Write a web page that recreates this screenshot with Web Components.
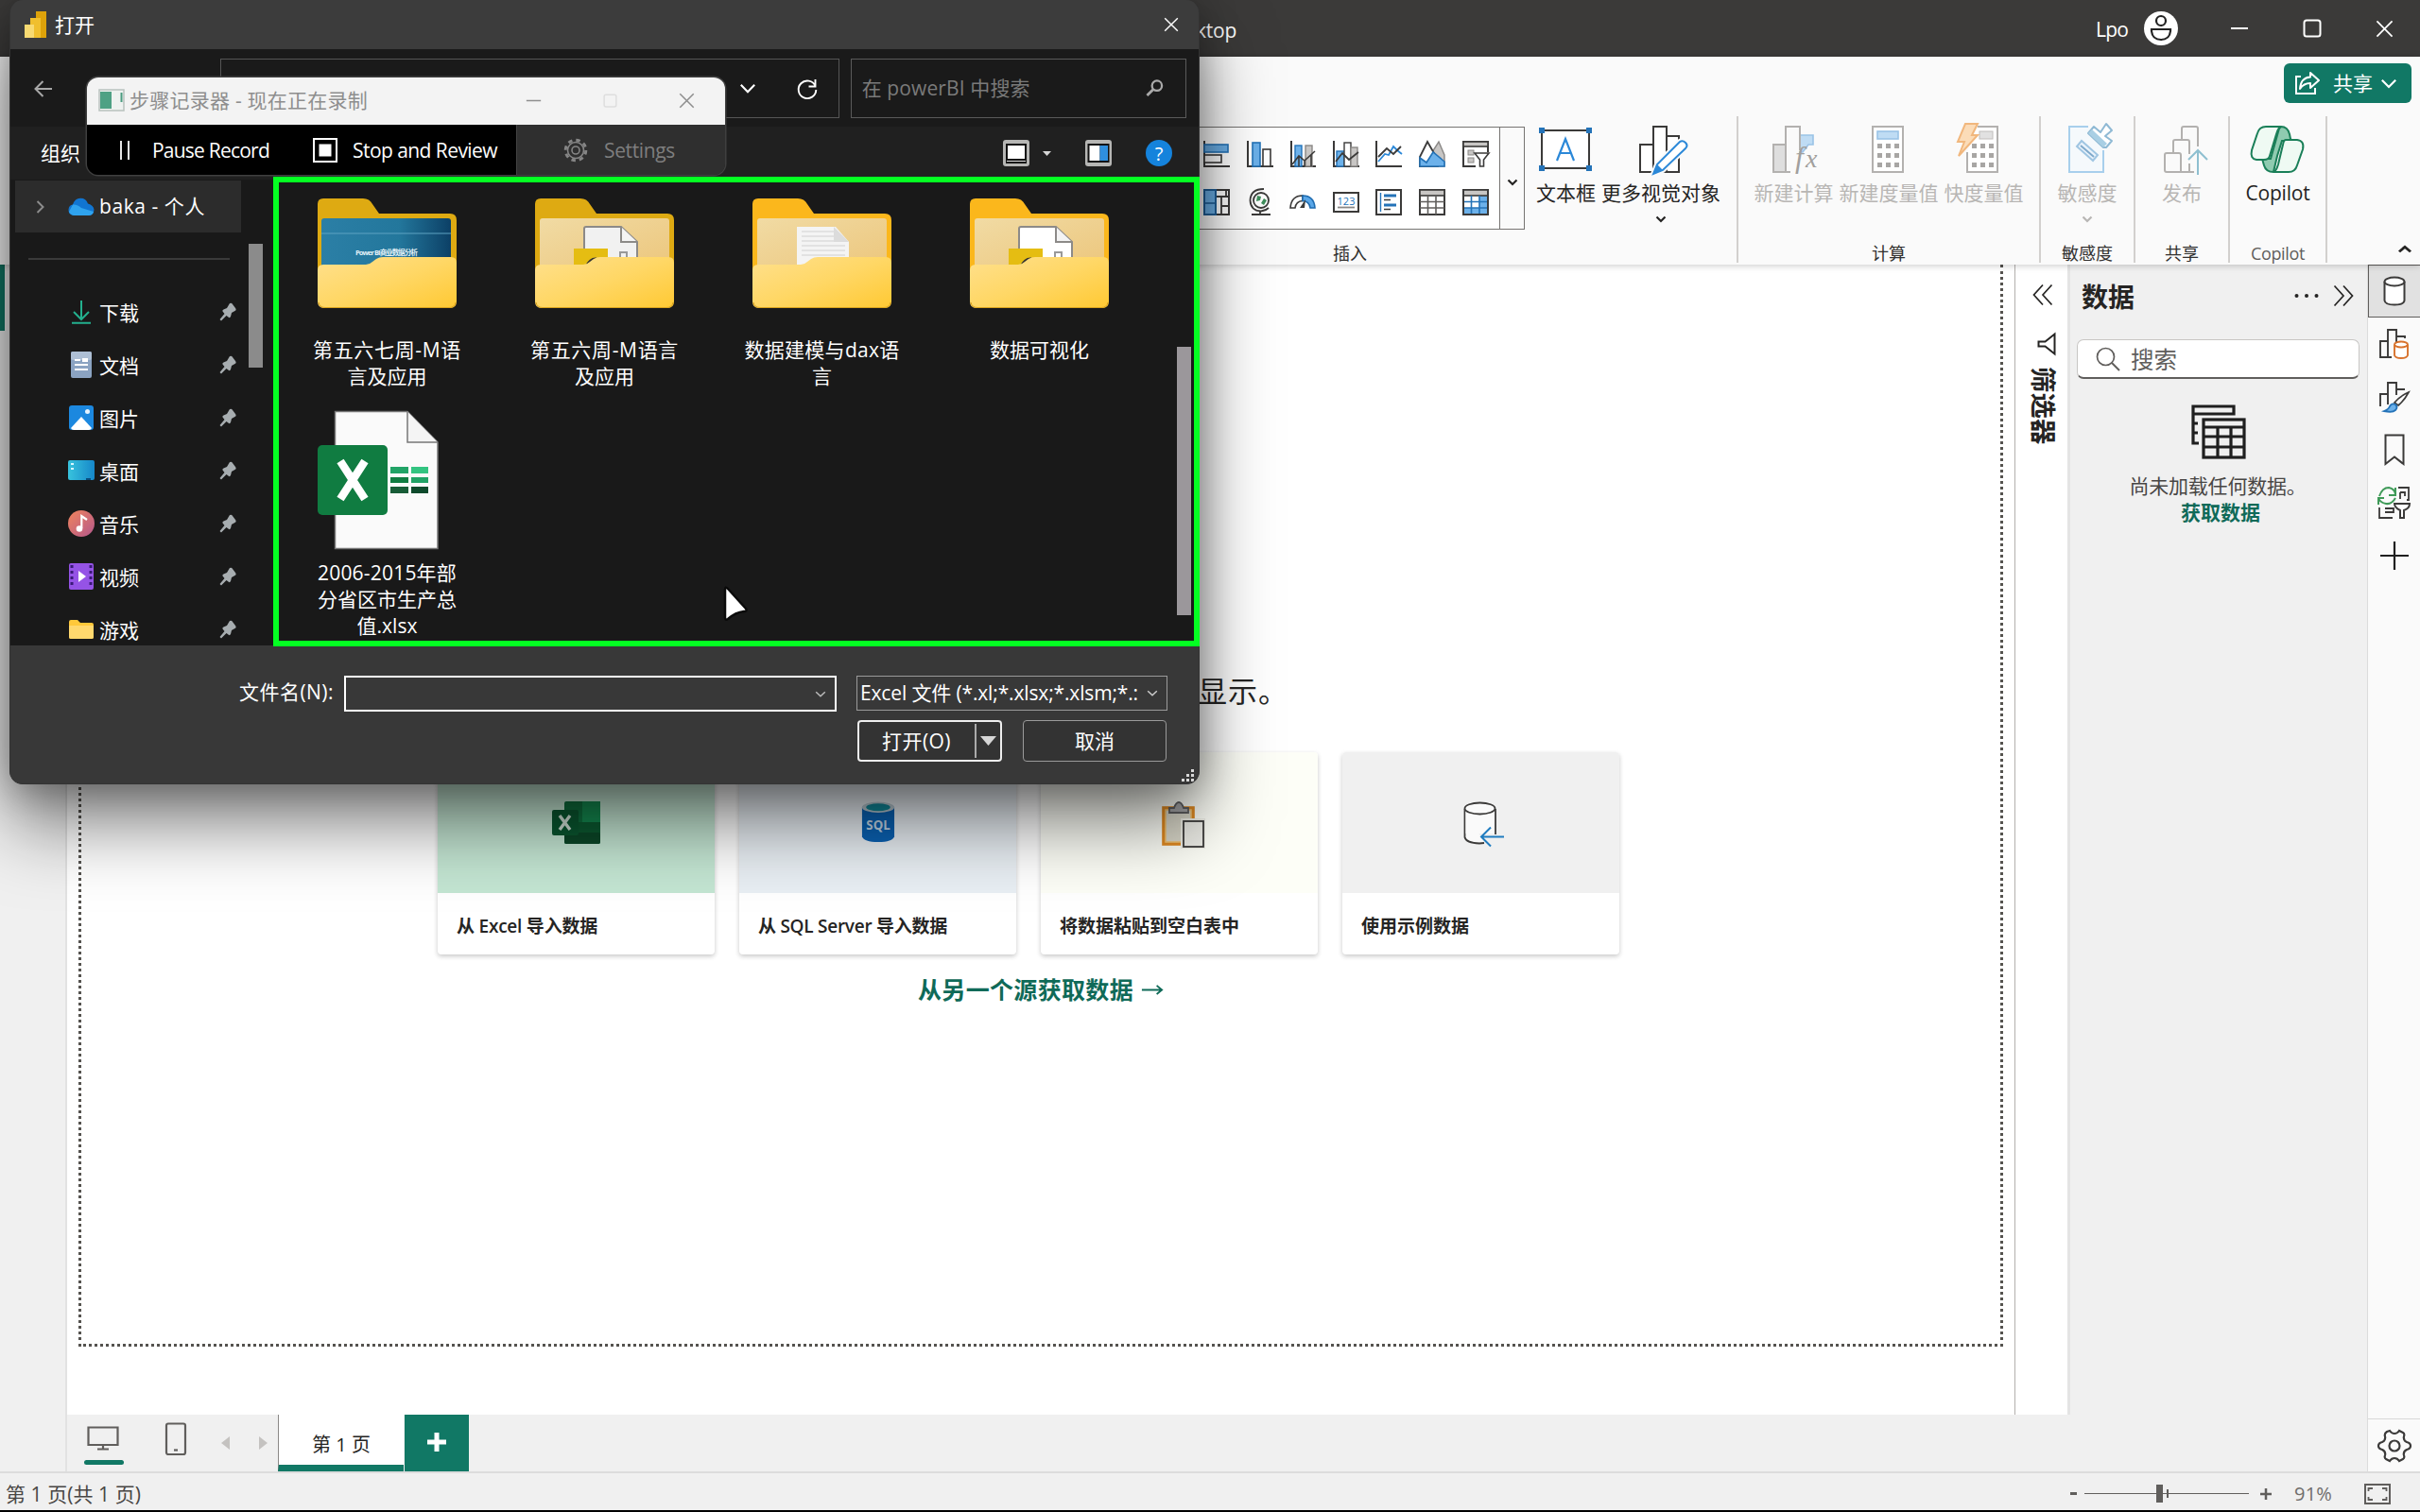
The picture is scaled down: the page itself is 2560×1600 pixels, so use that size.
<!DOCTYPE html>
<html lang="zh-CN">
<head>
<meta charset="utf-8">
<title>Power BI Desktop</title>
<style>
html,body{margin:0;padding:0}
body{width:2560px;height:1600px;overflow:hidden;background:#000;font-family:"Open Sans","Noto Sans CJK SC",sans-serif;font-size:21px;line-height:28px;color:#252423}
</style>
</head>
<body>
<power-app></power-app>
<script>
const BASE = '*{box-sizing:border-box}:host{display:block;box-sizing:border-box}';
function component(name, css, html, ready) {
  const tpl = document.createElement('template');
  tpl.innerHTML = '<style>' + BASE + css + '</style>' + html;
  customElements.define(name, class extends HTMLElement {
    connectedCallback() {
      if (this.shadowRoot) return;
      this.attachShadow({ mode: 'open' }).appendChild(tpl.content.cloneNode(true));
      if (ready) ready(this, this.shadowRoot);
    }
  });
}

/* ---------- icons: [viewBox width, viewBox height, markup] ---------- */
const K = '#3b3a39', B = '#2b88d8';
const CALC_KEYS = (x) => [28, 38, 48].map(y => [0, 9, 18].map(d => `<rect x="${x + d}" y="${y - 10}" width="5" height="5" fill="#a8a6a4"/>`).join('')).join('');
const FOLDER = (inner, back) => `
<defs><linearGradient id="f" x1="0" y1="0" x2="1" y2="1"><stop offset="0" stop-color="#ffe08d"/><stop offset=".5" stop-color="#ffd765"/><stop offset="1" stop-color="#ffc933"/></linearGradient>
<linearGradient id="p" x1="0" y1="0" x2="1" y2="0"><stop offset="0" stop-color="#2b7fa6"/><stop offset=".6" stop-color="#23779c"/><stop offset="1" stop-color="#0c4066"/></linearGradient>
<linearGradient id="t" x1="0" y1="0" x2="1" y2="1"><stop offset="0" stop-color="#f1dba4"/><stop offset="1" stop-color="#ecc67c"/></linearGradient></defs>
<path d="M6 0H48Q55 0 58 6L65 16H140Q147 16 147 23V104H0V6Q0 0 6 0Z" fill="${back}"/>${inner}
<path d="M0 76Q0 70 6 70H51Q55 70 58 67L62 64Q65 62 69 62H141Q147 62 147 68V109Q147 116 140 116H7Q0 116 0 109Z" fill="url(#f)"/><path d="M1 110Q2 115.5 8 115.5H139Q145 115.5 146 110" stroke="#d9a21c" fill="none"/>`;
const DOCS = (x, fill) => `<rect x="5" y="21" width="137" height="55" rx="3" fill="url(#t)"/><path d="M${x} 76V32Q${x} 30 ${x + 2} 30H${x + 39}L${x + 56} 46V76Z" fill="${fill}" stroke="#8c8a88" stroke-width="2"/><path d="M${x + 39} 30V46H${x + 56}" fill="#f4f4f4" stroke="#8c8a88" stroke-width="2"/><rect x="${x + 38}" y="57" width="7" height="12" fill="none" stroke="#999" stroke-width="2"/><rect x="${x - 11}" y="53" width="36" height="24" fill="#e5bd12"/><path d="M${x + 2} 72Q${x + 7} 63 ${x + 13} 64" stroke="#333" stroke-width="3" fill="none"/>`;
const ICONS = {
  min: [20, 20, '<path d="M1 10H19" stroke="currentColor" stroke-width="2"/>'],
  max: [20, 20, '<rect x="1.5" y="1.5" width="17" height="17" rx="2.5" fill="none" stroke="currentColor" stroke-width="2"/>'],
  close: [20, 20, '<path d="M1.5 1.5L18.5 18.5M18.5 1.5L1.5 18.5" stroke="currentColor" stroke-width="1.8"/>'],
  avatar: [36, 36, '<circle cx="18" cy="18" r="18" fill="#fff"/><circle cx="18" cy="10" r="5" fill="none" stroke="#222" stroke-width="2.2"/><path d="M8 19H28V21Q27 30 18 30Q9 30 8 21Z" fill="none" stroke="#222" stroke-width="2.2"/>'],
  down: [20, 12, '<path d="M2 2L10 10L18 2" fill="none" stroke="currentColor" stroke-width="2.4"/>'],
  downb: [12, 8, '<path d="M1.5 1.5L6 6L10.5 1.5" fill="none" stroke="currentColor" stroke-width="2.2"/>'],
  share: [28, 26, '<path d="M7 6H2V24H22V18" fill="none" stroke="#fff" stroke-width="2"/><path d="M17 2L26 10L17 18V13Q10 13 6 19Q7 7 17 6.5Z" fill="none" stroke="#fff" stroke-width="2" stroke-linejoin="round"/>'],
  bar: [28, 28, `<path d="M1 0V27H28" fill="none" stroke="${K}" stroke-width="2"/><rect x="1" y="4" width="25" height="8" fill="#6cb1ea" stroke="#2473b8" stroke-width="1.6"/><rect x="1" y="15" width="18" height="8" fill="#fff" stroke="${K}" stroke-width="1.6"/>`],
  col: [28, 28, `<path d="M1 0V27H28" fill="none" stroke="${K}" stroke-width="2"/><rect x="6" y="2" width="8" height="25" fill="#6cb1ea" stroke="#2473b8" stroke-width="1.6"/><rect x="17" y="9" width="8" height="18" fill="#fff" stroke="${K}" stroke-width="1.6"/>`],
  combo: [28, 28, `<path d="M2 0V27H28" fill="none" stroke="${K}" stroke-width="2"/><rect x="6" y="5" width="7" height="22" fill="#6cb1ea" stroke="#2473b8" stroke-width="1.4"/><rect x="17" y="5" width="7" height="22" fill="#c8c6c4" stroke="#8a8886" stroke-width="1.4"/><path d="M3 25L10 16L16 21L27 11M10 16V27M16 21V27M23 15V27" fill="none" stroke="${K}" stroke-width="1.6"/>`],
  combo2: [28, 28, `<path d="M1 0V27H28" fill="none" stroke="${K}" stroke-width="2"/><rect x="4" y="11" width="8" height="16" fill="#6cb1ea" stroke="#2473b8" stroke-width="1.4"/><rect x="12" y="2" width="7" height="25" fill="#fff" stroke="${K}" stroke-width="1.4"/><rect x="19" y="7" width="7" height="20" fill="#c8c6c4" stroke="#8a8886" stroke-width="1.4"/><path d="M3 22L10 13L17 20L27 12" fill="none" stroke="${K}" stroke-width="1.8"/>`],
  line: [28, 28, `<path d="M1 0V27H28" fill="none" stroke="${K}" stroke-width="2"/><path d="M3 22L10 14L14 15L19 6L23 10L28 14" fill="none" stroke="${B}" stroke-width="1.8"/><path d="M3 17L12 8L19 14L27 6" fill="none" stroke="${K}" stroke-width="1.8"/>`],
  area: [28, 28, `<path d="M21 1L27 15V27H14V12Z" fill="#c8c6c4" stroke="#8a8886" stroke-width="1.4"/><path d="M1 27V17L9 1L20 20V27Z" fill="#fff" stroke="${K}" stroke-width="1.8"/><path d="M1 18L8 23L15 12L27 22V27H1Z" fill="#6cb1ea" stroke="#2473b8" stroke-width="1.6"/>`],
  slicer: [28, 28, `<path d="M14 27H1V1H27V12" fill="#fff" stroke="${K}" stroke-width="2"/><rect x="1" y="1" width="26" height="5" fill="#c8c6c4" stroke="${K}" stroke-width="1.6"/><rect x="6" y="10" width="6" height="5" fill="#c8c6c4" stroke="#8a8886"/><rect x="6" y="18" width="6" height="5" fill="#c8c6c4" stroke="#8a8886"/><path d="M13 13H28L22.500 20V27H18.500V20Z" fill="#fff" stroke="${K}" stroke-width="1.6"/>`],
  tree: [28, 28, `<rect x="1" y="1" width="26" height="26" fill="#fff" stroke="${K}" stroke-width="2"/><rect x="1" y="1" width="12" height="26" fill="#6cb1ea" stroke="#1f5f99" stroke-width="2"/><path d="M1 15H13" stroke="#1f5f99" stroke-width="1.6"/><path d="M14 8H27M19 8V27M19 18H27M24 1V8" stroke="${K}" stroke-width="1.8"/>`],
  globe: [28, 28, `<circle cx="15" cy="12" r="8" fill="#fff" stroke="${K}" stroke-width="1.8"/><path d="M11 7L15 8L14 12L10 13ZM18 10L21 12L18 17L15 15Z" fill="#3f8f5c"/><path d="M18 0Q4 0 3.500 12Q4 23 15 23.500Q20 23 23 20M14 23V27M5 27H25" fill="none" stroke="${K}" stroke-width="1.8"/>`],
  gauge: [28, 28, `<path d="M1 20Q2 7 14 7V12.500Q7 13 6 20Z" fill="#fff" stroke="${K}" stroke-width="1.6"/><path d="M14 7Q26 7 27 20H22Q21 13 14 12.500Z" fill="#5aa7e8" stroke="#1f6cb0" stroke-width="1.6"/><path d="M11 20L17 11L16 20Z" fill="${K}"/>`],
  card: [28, 28, `<rect x="1" y="4" width="26" height="20" fill="#fff" stroke="${K}" stroke-width="2"/><text x="14" y="16.500" text-anchor="middle" font-size="11" font-family="Open Sans" fill="#2473b8">123</text><path d="M5 19.500H23" stroke="#8a8886" stroke-width="1.8"/>`],
  multi: [28, 28, `<rect x="1" y="1" width="26" height="26" fill="#fff" stroke="${K}" stroke-width="2"/><path d="M5.500 4V24" stroke="#2473b8" stroke-width="1.4"/><path d="M9 7H22M9 17H22" stroke="#2473b8" stroke-width="3"/><path d="M9 11.500H16M9 21.500H16" stroke="${K}" stroke-width="1.6"/>`],
  table: [28, 28, `<rect x="1" y="1" width="26" height="26" fill="#fff" stroke="${K}" stroke-width="2"/><rect x="1" y="1" width="26" height="6" fill="#c8c6c4" stroke="${K}" stroke-width="1.6"/><path d="M1 13.500H27M1 20H27M9.500 7V27M18 7V27" stroke="#605e5c" stroke-width="1.6"/>`],
  matrix: [28, 28, `<rect x="1" y="1" width="26" height="26" fill="#fff" stroke="${K}" stroke-width="2"/><rect x="18" y="7" width="9" height="20" fill="#6cb1ea"/><rect x="1" y="20" width="26" height="7" fill="#6cb1ea"/><rect x="1" y="1" width="26" height="6" fill="#c8c6c4" stroke="${K}" stroke-width="1.6"/><path d="M1 13.500H27M1 20H27M9.500 7V27M18 7V27" stroke="#2473b8" stroke-width="1.6"/><path d="M1 1V27H27V1" fill="none" stroke="${K}" stroke-width="2"/>`],
  textbox: [56, 54, `<rect x="3" y="7" width="50" height="40" fill="#fff" stroke="${K}" stroke-width="2"/><g fill="#2473b8"><rect x="0" y="4" width="6" height="6"/><rect x="50" y="4" width="6" height="6"/><rect x="0" y="44" width="6" height="6"/><rect x="50" y="44" width="6" height="6"/></g><path d="M19 39L28 16L37 39M22 31H34" fill="none" stroke="${B}" stroke-width="2.200"/>`],
  morevis: [54, 54, `<path d="M16 22H2V51H16M16 51V3H30V51ZM30 13H43V51H30" fill="#fff" stroke="${K}" stroke-width="2"/><path d="M16 53L20 43L44 19Q47 17 50 20Q53 23 50 26L26 49Z" fill="#fff" stroke="#fafafa" stroke-width="6"/><path d="M16 53L20 43L44 19Q47 17 50 20Q53 23 50 26L26 49Z" fill="#fff" stroke="${B}" stroke-width="2"/><path d="M16 53L20 43L26 49Z" fill="${B}"/>`],
  newcalc: [50, 54, '<path d="M14 22H1V51H14" fill="#dedede" stroke="#b3b1af" stroke-width="2"/><path d="M29 12H43V22L38 22L32 30H29Z" fill="#bfdcf4" stroke="#9ac3e6" stroke-width="1.600"/><path d="M14 51V3H29V28" fill="#fafafa" stroke="#b3b1af" stroke-width="2"/><path d="M14 51H19" stroke="#b3b1af" stroke-width="2"/><text x="24" y="46" font-family="Liberation Serif" font-style="italic" font-size="32" fill="#a19f9d">f</text><text x="35" y="46" font-family="Liberation Serif" font-style="italic" font-size="28" fill="#a19f9d">x</text>'],
  calc: [36, 54, `<rect x="2" y="3" width="32" height="48" fill="#fff" stroke="#b3b1af" stroke-width="2"/><rect x="7" y="8" width="22" height="8" fill="#bfdcf4" stroke="#9ac3e6" stroke-width="1.600"/><g transform="translate(0,3)">${CALC_KEYS(7)}</g>`],
  quick: [46, 54, `<path d="M22 3H43V51H11V30" fill="#fff" stroke="#b3b1af" stroke-width="2"/><rect x="24" y="8" width="14" height="8" fill="#e1e1e1" stroke="#c0bebc"/><g transform="translate(0,3)">${CALC_KEYS(16)}</g><path d="M9 0H22L16 12H22L2 34L8 19H1Z" fill="#fbdcb8" stroke="#f1b77d" stroke-width="2"/>`],
  sens: [50, 54, '<path d="M22 3H2V51H38V28" fill="#f5f9fc" stroke="#a8cfec" stroke-width="2"/><path d="M10 24L15 18L32 33L27 39Z" fill="#eaf3fb" stroke="#9fc5e2" stroke-width="2"/><path d="M14 23L28 35" stroke="#7fa9cb" stroke-width="2"/><path d="M22 10L28 3L35 9L41 0L47 7L40 13L47 18L41 25H38Z" fill="#fff" stroke="#8fb9d4" stroke-width="2" stroke-linejoin="round"/><path d="M22 10L38 25L42 21L26 6Z" fill="#a9cfe4"/>'],
  publish: [48, 54, '<path d="M27 51V42M19 17V5Q19 3 21 3H34Q36 3 36 5V24M10 30V19Q10 17 12 17H25Q27 17 27 19V32M1 33Q1 31 3 31H16Q18 31 18 33V51H3Q1 51 1 49ZM18 51H32" fill="none" stroke="#b3b1af" stroke-width="2"/><path d="M36 54V28M26 38L36 28L46 38" fill="none" stroke="#8ebfd0" stroke-width="2"/>'],
  copilot: [58, 54, '<path d="M33 3Q40 3 42 11L43 16Q44 18 48 18H34L29 34L25 51Q17 51 15 44L13 37H22L31 5Z" fill="#8fcbb0" stroke="#1a7f58" stroke-width="2"/><path d="M17 3H33Q30 4 28 11L21 34Q20 38 15 38H7Q0 37 2 28L8 10Q10 3 17 3Z" fill="#effaf3" stroke="#1a7f58" stroke-width="2"/><path d="M38 17H50Q58 18 56 27L50 44Q48 51 41 51H25Q28 50 30 43L35 22Q36 17 38 17Z" fill="#effaf3" stroke="#1a7f58" stroke-width="2"/>'],
  dblleft: [22, 24, '<path d="M11 1.500L1.500 12L11 22.500M20.500 1.500L11 12L20.500 22.500" fill="none" stroke="#252423" stroke-width="1.700"/>'],
  dblright: [22, 24, '<path d="M1.500 1.500L11 12L1.500 22.500M11 1.500L20.500 12L11 22.500" fill="none" stroke="#252423" stroke-width="1.700"/>'],
  funnel: [20, 24, '<path d="M18.500 1.500V22.500L8.500 14.500H1.500V9.500H8.500Z" fill="none" stroke="#252423" stroke-width="2"/>'],
  dots: [26, 6, '<g fill="#252423"><circle cx="2.500" cy="3" r="2"/><circle cx="13" cy="3" r="2"/><circle cx="23.500" cy="3" r="2"/></g>'],
  find: [26, 26, '<circle cx="10.500" cy="10.500" r="9" fill="none" stroke="#605e5c" stroke-width="1.700"/><path d="M17 17L25 25" stroke="#605e5c" stroke-width="2"/>'],
  tables: [58, 58, '<g fill="none" stroke="#1f1f1f" stroke-width="3.200"><path d="M8 41H2V2H45V10H2M2 20H7M2 30H7"/><rect x="13" y="16" width="43" height="40"/><path d="M13 24H56M13 34H56M13 45H56M28 24V56M42 24V56"/></g>'],
  cyl: [24, 32, '<path d="M1.500 6V26Q2 30.500 12 30.500Q22 30.500 22.500 26V6" fill="#fff" stroke="#3b3a39" stroke-width="2"/><ellipse cx="12" cy="6" rx="10.500" ry="4.500" fill="#fff" stroke="#3b3a39" stroke-width="2"/>'],
  railbuild: [32, 32, '<path d="M9 13H1V30H9M13 30H9V1H18V14M18 8H27V10" fill="none" stroke="#3b3a39" stroke-width="1.900"/><path d="M16 17V28Q17 31 23 31Q29 31 30 28V17" fill="#fff" stroke="#d8722c" stroke-width="1.900"/><ellipse cx="23" cy="16.500" rx="7" ry="3" fill="#fff" stroke="#d8722c" stroke-width="1.900"/>'],
  railbrush: [32, 32, '<path d="M1 26V13H9M9 24V1H18V14M18 8H27" fill="none" stroke="#3b3a39" stroke-width="1.900"/><path d="M16 22Q22 15 31 11Q27 19 20 25Z" fill="#fff" stroke="#3b3a39" stroke-width="1.700"/><path d="M5 31Q10 29 11 26Q13 22 17 24Q20 27 17 30Q14 33 5 31Z" fill="#6cb1ea" stroke="#2473b8" stroke-width="1.800"/>'],
  bookmark: [22, 34, '<path d="M1.500 1.500H20.500V32L11 24.500L1.500 32Z" fill="none" stroke="#3b3a39" stroke-width="2"/>'],
  sync: [36, 36, '<path d="M2 11Q5 2 12 2Q18 3 19 9M19 2V10H12M19 13Q15 20 9 19Q3 18 1 13M1 20V13H7" fill="none" stroke="#3f9a58" stroke-width="2"/><path d="M22 2H33V15H31M24 7H29V11M24 7V14M2 23V34H16M8 28H17V24H8" fill="none" stroke="#3b3a39" stroke-width="1.800"/><path d="M18 19H34Q34 24 28 26V34H24V26Q18 23 18 19Z" fill="#fff" stroke="#3b3a39" stroke-width="2"/>'],
  plus: [32, 32, '<path d="M16 1V31M1 16H31" stroke="#1f1f1f" stroke-width="2.200"/>'],
  cog: [36, 36, '<path d="M10 3L13 2Q15 5 18 5Q21 5 23 2L27 4Q29 5 28 8Q27 12 31 14Q35 15 35 18Q35 21 31 22Q27 24 28 28Q29 31 27 32L23 34Q21 31 18 31Q15 31 13 34L9 32Q7 31 8 28Q9 24 5 22Q1 21 1 18Q1 15 5 14Q9 12 8 8Q7 5 10 3Z" fill="none" stroke="#3b3a39" stroke-width="2.200"/><circle cx="18" cy="18" r="5.500" fill="none" stroke="#3b3a39" stroke-width="2.200"/>'],
  desktop: [34, 26, '<path d="M1.500 1.500H32.500V20H1.500ZM17 20V24M11 24.500H23" fill="none" stroke="#605e5c" stroke-width="2.200"/>'],
  phone: [24, 36, '<rect x="2" y="1.500" width="20" height="32.500" rx="2" fill="none" stroke="#605e5c" stroke-width="2.200"/><path d="M10 29.500H14" stroke="#605e5c" stroke-width="2.200"/>'],
  tleft: [9, 14, '<path d="M9 0V14L0 7Z" fill="#c4c2c0"/>'],
  tright: [9, 14, '<path d="M0 0V14L9 7Z" fill="#c4c2c0"/>'],
  tabplus: [20, 20, '<path d="M10 0V20M0 10H20" stroke="#fff" stroke-width="5"/>'],
  fit: [28, 22, '<rect x="1" y="1" width="26" height="20" fill="none" stroke="#605e5c" stroke-width="2"/><path d="M4.500 8V5H9M19 5H23.500V8M4.500 14V17H9M19 17H23.500V14" fill="none" stroke="#605e5c" stroke-width="1.800"/>'],
  excelapp: [52, 46, '<rect x="13" y="0" width="38" height="45" rx="2" fill="#0f6f3e"/><rect x="32" y="0" width="19" height="22" fill="#158a50"/><rect x="13" y="22" width="38" height="12" fill="#0c5a31"/><rect x="13" y="33" width="38" height="12" rx="2" fill="#0b4727"/><rect x="0" y="9" width="28" height="27" rx="2" fill="#0a5730"/><path d="M8 15L19 30M19 15L8 30" stroke="#cfe0d5" stroke-width="3.400"/>'],
  sqlapp: [38, 46, '<path d="M1 6V39Q3 45 19 45Q35 45 37 39V6Z" fill="#0a62b4"/><ellipse cx="19" cy="6.500" rx="18" ry="6" fill="#b9c9d2"/><ellipse cx="19" cy="6.500" rx="13.500" ry="4.200" fill="#128a9c"/><text x="19" y="31" text-anchor="middle" font-family="Open Sans" font-size="14" font-weight="700" fill="#c3d7e8">SQL</text>'],
  paste: [46, 50, '<rect x="3" y="7" width="31" height="38" fill="#d8d6c8" stroke="#e08a22" stroke-width="3.600"/><rect x="5" y="9" width="27" height="34" fill="none" stroke="#f2c16e" stroke-width="1.500"/><path d="M9 12V7H14Q16 1 19 1Q22 1 24 7H29V12Z" fill="#a4a4a6" stroke="#5e5e60" stroke-width="1.800"/><rect x="21" y="18" width="26" height="32" fill="#eeeee6"/><rect x="24" y="21" width="21" height="27" fill="#ecece6" stroke="#3b3a39" stroke-width="1.800"/>'],
  sample: [44, 48, '<path d="M1.500 8V38Q3 44 17 44.500L22 44M34 8V35" fill="#fafafa" stroke="#3b3a39" stroke-width="1.800"/><rect x="2.500" y="8" width="30.500" height="26" fill="#fafafa"/><ellipse cx="17.500" cy="7.500" rx="16" ry="6" fill="#fafafa" stroke="#3b3a39" stroke-width="1.800"/><path d="M43 37.500H20M29 27.500L19 37.500L29 47.500" fill="none" stroke="#1f7cc0" stroke-width="2"/>'],
  arrow: [26, 14, '<path d="M1 7H24M18 2L24 7L18 12" fill="none" stroke="#0f6a58" stroke-width="2"/>'],
  pbi: [24, 28, '<rect x="12" y="0" width="11" height="28" fill="#dda20a"/><rect x="6" y="7" width="11" height="21" fill="#f0bf2e"/><rect x="0" y="14" width="10" height="14" fill="#f8da72"/>'],
  back: [20, 18, '<path d="M19 9H2M9.500 1L1.500 9L9.500 17" fill="none" stroke="#a8a8a8" stroke-width="2"/>'],
  refresh: [22, 22, '<path d="M19.500 8A9.300 9.300 0 1 0 20.300 12M19.500 1V8.500H12.500" fill="none" stroke="#fff" stroke-width="1.900"/>'],
  mag: [20, 20, '<circle cx="12.500" cy="7" r="5.500" fill="none" stroke="#a9a9a9" stroke-width="2.400"/><path d="M8.500 11L1.500 18" stroke="#a9a9a9" stroke-width="3"/>'],
  view: [28, 28, '<rect width="28" height="28" rx="3" fill="#b6b6b4"/><rect x="3" y="4" width="22" height="21" fill="#111"/><rect x="5" y="6" width="18" height="14" fill="#fff"/><path d="M4 22.500H24" stroke="#ddd" stroke-width="1"/>'],
  pane: [28, 28, '<rect width="28" height="28" rx="3" fill="#b6b6b4"/><rect x="2.500" y="4" width="23" height="20" fill="#111"/><rect x="4.500" y="6" width="11" height="16" fill="#fff"/><rect x="15.500" y="6" width="8.500" height="16" fill="#2f8fdf"/>'],
  help: [28, 28, '<circle cx="14" cy="14" r="14" fill="#1583dc"/><text x="14" y="21.500" text-anchor="middle" font-family="Open Sans" font-size="20" fill="#fff">?</text>'],
  tri: [14, 9, '<path d="M0 0H14L7 9Z" fill="#d6d6d6"/>'],
  chev: [9, 14, '<path d="M1.500 1L7.500 7L1.500 13" fill="none" stroke="#8c8c8c" stroke-width="2"/>'],
  cloud: [28, 20, '<path d="M6 19Q0 18 .5 12.500Q1 8 5 7.500Q7 1 13 .7Q19 .5 21 6.500Q27 8 27.500 13Q27 19 21.500 19Z" fill="#1175d1"/><path d="M5 7.500Q10 7 14 11L27 15Q26 19 21.500 19H6Q2 18 1 15Z" fill="#2fa3ee"/>'],
  dl: [22, 26, '<path d="M11 1V20M3 13L11 21L19 13M1 24.800H21" fill="none" stroke="#23b08e" stroke-width="2"/>'],
  doc: [22, 28, '<rect width="22" height="28" rx="2" fill="#8ba3c2"/><rect width="22" height="9" rx="2" fill="#aebfd4"/><path d="M4 9H10M4 14H18M4 19H18" stroke="#fff" stroke-width="2.200"/><rect x="12" y="7" width="6" height="4" fill="#fff"/>'],
  pic: [26, 26, '<rect width="26" height="26" rx="3" fill="#1c88df"/><path d="M2 24L13 12L24 24Q23 26 21 26H5Q3 26 2 24Z" fill="#fff"/><circle cx="19.500" cy="6.500" r="2.500" fill="#e6f4ff"/>'],
  desk: [28, 22, '<defs><linearGradient id="g"><stop offset="0" stop-color="#38c3dd"/><stop offset="1" stop-color="#1687c9"/></linearGradient></defs><rect width="28" height="21" rx="2" fill="url(#g)"/><path d="M3 4H6M3 9H6" stroke="#d8f6ff" stroke-width="2"/><path d="M19 20H24" stroke="#0a4c7c" stroke-width="2"/>'],
  music: [28, 28, '<defs><linearGradient id="m" x1="0" y1="0" x2="1" y2="1"><stop offset="0" stop-color="#f0845c"/><stop offset="1" stop-color="#b4588c"/></linearGradient></defs><circle cx="14" cy="14" r="14" fill="url(#m)"/><circle cx="12" cy="19.500" r="3.300" fill="#fff"/><path d="M14.300 19V6L20 10" fill="none" stroke="#fff" stroke-width="2.200"/>'],
  video: [26, 28, '<rect width="26" height="28" rx="2" fill="#9553e6"/><path d="M3 2V26M23 2V26" stroke="#3b1a78" stroke-width="3" stroke-dasharray="3 3"/><path d="M10 8V20L18 14Z" fill="#fff"/>'],
  game: [26, 20, '<path d="M0 2Q0 0 2 0H9L12 3H24Q26 3 26 5V18Q26 20 24 20H2Q0 20 0 18Z" fill="#ffc83a"/><path d="M0 6H26V18Q26 20 24 20H2Q0 20 0 18Z" fill="#ffd86e"/>'],
  pin: [18, 20, '<path d="M11 1Q13 0 14 2L17 6Q18.500 8 16.500 9L13 11L12 15Q11 17 9.500 15.500L7.500 14L2 19.500L0.500 18L5.500 12L3.500 9.500Q3 8 4.500 7.500L8 6Z" fill="#a7adb0"/>'],
  folder1: [147, 117, FOLDER('<rect x="4" y="21" width="137" height="55" rx="3" fill="url(#p)"/><path d="M4 37H141" stroke="#5fa3c2"/><text x="73" y="60" text-anchor="middle" textLength="66" font-family="Open Sans,Noto Sans CJK SC" font-size="7.500" font-weight="700" fill="#e2f0f6">Power BI商业数据分析</text>', '#deaa12')],
  folder2: [147, 117, FOLDER(DOCS(52, '#f1f1f1'), '#deaa12')],
  folder3: [147, 117, FOLDER('<rect x="5" y="21" width="137" height="55" rx="3" fill="url(#t)"/><path d="M47 76V30H88L102 46V76Z" fill="#f4f4f4"/><path d="M52 35H86M52 40H86M52 45H86M52 50H98M52 55H98M52 60H98" stroke="#cfcfcf" stroke-width="1.200"/><path d="M86 30V46H102Z" fill="#dcdcdc"/>', '#fbb71c')],
  folder4: [147, 117, FOLDER(DOCS(52, '#fff'), '#fbb71c')],
  xlsx: [147, 147, '<path d="M18.500 .5H95L127 33V145.500H18.500Z" fill="#fafafa" stroke="#777" stroke-width="1.500"/><path d="M95 .5V33H127" fill="#f4f4f4" stroke="#777" stroke-width="1.500"/><rect x="0" y="36" width="74" height="74" rx="5" fill="#107c41"/><path d="M24 53L50 93M50 53L24 93" stroke="#fff" stroke-width="8.500"/><g><rect x="77" y="59" width="19" height="7" fill="#21a366"/><rect x="99" y="59" width="18" height="7" fill="#33c481"/><rect x="77" y="70" width="19" height="6" fill="#107c41"/><rect x="99" y="70" width="18" height="6" fill="#21a366"/><rect x="77" y="80" width="19" height="7" fill="#185c37"/><rect x="99" y="80" width="18" height="7" fill="#0e4a2c"/></g>'],
  recorder: [28, 24, '<rect x="1" y="1" width="26" height="22" fill="#eef2f0" stroke="#b9c2be" stroke-width="1.500"/><rect x="2" y="3" width="12" height="18" fill="#4ea184"/><path d="M24.500 4V14" stroke="#4b9c80" stroke-width="2"/>'],
  pause: [12, 20, '<path d="M2 0V20M10 0V20" stroke="#fff" stroke-width="1.800"/>'],
  stop: [26, 26, '<rect x="1" y="1" width="24" height="24" fill="none" stroke="#fff" stroke-width="2"/><rect x="6.500" y="6.500" width="13" height="13" fill="#fff"/>'],
  gear2: [26, 26, '<circle cx="13" cy="13" r="10.800" fill="none" stroke="#858585" stroke-width="3" stroke-dasharray="4.500 3.980"/><circle cx="13" cy="13" r="8.500" fill="none" stroke="#858585" stroke-width="1.600"/><circle cx="13" cy="13" r="4" fill="none" stroke="#858585" stroke-width="1.600"/>'],
  grip: [14, 14, '<g fill="#d8d8d8"><rect x="0" y="10" width="3" height="3"/><rect x="5" y="10" width="3" height="3"/><rect x="10" y="10" width="3" height="3"/><rect x="5" y="5" width="3" height="3"/><rect x="10" y="5" width="3" height="3"/><rect x="10" y="0" width="3" height="3"/></g>'],
  cursor: [30, 42, '<path d="M3 5Q3 1 6 4L25 25Q27 28 23 28Q14 29 6 36Q3 38 3 34Z" fill="#fff" stroke="#0a0a0a" stroke-width="2.500"/>']
};
customElements.define('ui-icon', class extends HTMLElement {
  connectedCallback() {
    if (this.shadowRoot) return;
    const [w, h, body] = ICONS[this.getAttribute('name')];
    const W = this.getAttribute('w') || w, H = this.getAttribute('h') || (W * h / w);
    this.attachShadow({ mode: 'open' }).innerHTML = `<style>:host{display:block;flex:none;width:${W}px;height:${H}px}svg{display:block;overflow:visible}</style><svg width="${W}" height="${H}" viewBox="0 0 ${w} ${h}" preserveAspectRatio="none">${body}</svg>`;
  }
});
/* One line of text, tracked so that it fills the width in its w attribute. */
customElements.define('fit-text', class extends HTMLElement {
  connectedCallback() {
    if (this.shadowRoot) return;
    this.attachShadow({ mode: 'open' }).innerHTML = '<style>:host{display:block;flex:none;white-space:nowrap}span{display:inline-block}</style><span><slot></slot></span>';
    const w = +this.getAttribute('w'), span = this.shadowRoot.querySelector('span');
    if (!w) return;
    const n = [...this.textContent].length, now = span.getBoundingClientRect().width;
    if (!now || n < 2) return;
    span.style.letterSpacing = ((w - now) / n) + 'px';
    this.style.width = w + 'px';
  }
});

/* ---------- main window ---------- */
component('title-bar', `:host{height:60px;background:#3b3a39;color:#fff;display:flex;align-items:center;padding:0 28px 0 1265px}
.sp{flex:1}.name{padding-top:4px}.user{padding-top:2px;margin-right:17px}ui-icon.a{margin-right:55px;margin-top:-1px}ui-icon.m{margin-right:57px}`,
`<fit-text class="name" w="43">ktop</fit-text><div class="sp"></div><fit-text class="user" w="34">Lpo</fit-text><ui-icon class="a" name="avatar"></ui-icon><ui-icon class="m" name="min" w="20"></ui-icon><ui-icon class="m" name="max" w="20"></ui-icon><ui-icon name="close" w="19"></ui-icon>`);

component('ribbon-button', `:host{display:flex;flex-direction:column;align-items:center;padding-top:8px;flex:none}
:host([off]){color:#b8b6b4}.i{margin-bottom:5px;padding-left:var(--l,0);padding-right:var(--r,0)}.c{margin-top:10px}`,
`<div class="i"></div><slot></slot>`, (h, r) => {
  r.querySelector('.i').innerHTML = `<ui-icon name="${h.getAttribute('icon')}"></ui-icon>`;
  if (h.hasAttribute('menu')) r.appendChild(Object.assign(document.createElement('div'), { className: 'c', innerHTML: '<ui-icon name="downb"></ui-icon>' }));
});
component('ribbon-group', `:host{height:155px;border-right:2px solid #d2d0ce;display:flex;flex-direction:column;flex:none}
.b{flex:1;display:flex;justify-content:var(--j,center);gap:6px}.l{height:19px;line-height:19px;font-size:18px;text-align:center;display:flex;justify-content:center;color:#323130}`,
`<div class="b"><slot></slot></div><div class="l"><slot name="label"></slot></div>`);
component('visual-gallery', `:host{width:366px;height:109px;margin-top:11px;margin-right:6px;border:1px solid #767472;background:#fff;display:flex;padding-left:17px;flex:none}
.g{display:grid;grid-template-columns:repeat(7,45.600px);grid-template-rows:28px 28px;row-gap:23px;padding:14px 0 0 8px;width:321px}
.m{border-left:1px solid #767472;flex:1;display:flex;align-items:center;justify-content:center;padding-top:9px;background:#fafafa}`,
`<div class="g">${['bar','col','combo','combo2','line','area','slicer','tree','globe','gauge','card','multi','table','matrix'].map(n => `<ui-icon name="${n}"></ui-icon>`).join('')}</div><div class="m"><ui-icon name="downb"></ui-icon></div>`);
component('share-button', `:host{width:135px;height:42px;background:#117865;color:#fff;border-radius:6px;display:flex;align-items:center;padding-left:11px}
fit-text{margin:0 8px 0 13px}`, `<ui-icon name="share"></ui-icon><fit-text w="42">共享</fit-text><ui-icon name="down" w="18"></ui-icon>`);
component('ribbon-bar', `:host{height:220px;background:#fafafa;position:relative;z-index:1;box-shadow:0 1px 7px rgba(0,0,0,.22)}
.top{height:63px;display:flex;justify-content:flex-end;padding:7px 9px 0 0}.row{display:flex;padding-left:1019px}
.ins{width:820px;--j:flex-end}.calc{width:320px}.n{width:100px}.cp{width:103px}.end{flex:1;display:flex;justify-content:flex-end;align-items:flex-end;padding:0 8px 10px 0}.up{transform:scaleY(-1)}`,
`<div class="top"><share-button></share-button></div><div class="row">
<ribbon-group class="ins"><visual-gallery></visual-gallery><ribbon-button icon="textbox" style="--r:2px"><fit-text w="63">文本框</fit-text></ribbon-button><ribbon-button icon="morevis" menu style="margin-right:17px;--l:6px"><fit-text w="126">更多视觉对象</fit-text></ribbon-button><span slot="label">插入</span></ribbon-group>
<ribbon-group class="calc"><ribbon-button off icon="newcalc" style="--l:4px"><fit-text w="84">新建计算</fit-text></ribbon-button><ribbon-button off icon="calc" style="--r:2px"><fit-text w="105">新建度量值</fit-text></ribbon-button><ribbon-button off icon="quick" style="--r:11px"><fit-text w="84">快度量值</fit-text></ribbon-button><span slot="label">计算</span></ribbon-group>
<ribbon-group class="n"><ribbon-button off menu icon="sens" style="--l:8px"><fit-text w="63">敏感度</fit-text></ribbon-button><span slot="label">敏感度</span></ribbon-group>
<ribbon-group class="n"><ribbon-button off icon="publish" style="--l:9px"><fit-text w="42">发布</fit-text></ribbon-button><span slot="label">共享</span></ribbon-group>
<ribbon-group class="cp"><ribbon-button icon="copilot" style="--r:2px"><fit-text w="68">Copilot</fit-text></ribbon-button><fit-text w="57" slot="label" style="color:#605e5c">Copilot</fit-text></ribbon-group>
<div class="end"><ui-icon class="up" name="downb" w="16" h="9"></ui-icon></div></div>`);

component('source-card', `:host{width:293px;height:214px;border-radius:4px;background:#fff;box-shadow:0 2px 5px rgba(0,0,0,.22);display:flex;flex-direction:column;overflow:hidden;font-size:19px;font-weight:600}
.t{height:149px;background:var(--top);display:flex;justify-content:center;padding:52px 0 0 var(--l,0)}.b{flex:1;display:flex;align-items:center;padding:4px 0 0 20px}`,
`<div class="t"><slot name="icon"></slot></div><div class="b"><slot></slot></div>`);
component('report-canvas', `:host{flex:1;background:#fff;display:flex;padding:0 12px 72px 12px}
.page{flex:1;border:3px dotted #55534f;border-top:0;display:flex;flex-direction:column;padding-left:377px}
.msg{font-size:31px;line-height:40px;padding:431px 0 0 804px}.cards{display:flex;gap:26px;margin-top:45px}
.link{display:flex;align-items:center;gap:8px;margin:22px 0 0 508px;color:#0f6a58;font-size:25px;line-height:30px;font-weight:600}`,
`<div class="page"><div class="msg"><fit-text w="96">显示。</fit-text></div><div class="cards">
<source-card style="--top:#c4e6d3"><ui-icon slot="icon" name="excelapp"></ui-icon><fit-text w="149">从 Excel 导入数据</fit-text></source-card>
<source-card style="--top:#e9eff4"><ui-icon slot="icon" name="sqlapp" w="36" h="44"></ui-icon><fit-text w="200">从 SQL Server 导入数据</fit-text></source-card>
<source-card style="--top:#fdfef7;--l:6px"><ui-icon slot="icon" name="paste"></ui-icon><fit-text w="190">将数据粘贴到空白表中</fit-text></source-card>
<source-card style="--top:#f0f0f0;--l:6px"><ui-icon slot="icon" name="sample"></ui-icon><fit-text w="114">使用示例数据</fit-text></source-card></div>
<div class="link"><fit-text w="228">从另一个源获取数据</fit-text><ui-icon name="arrow" w="24"></ui-icon></div></div>`);
component('filter-pane', `:host{width:59px;background:#fff;border-left:1px solid #b3b0ad;border-right:3px solid #e4e4e4;display:flex;flex-direction:column;align-items:flex-start;padding:20px 0 0 18px}
.f{margin:28px 0 0 5px}.v{writing-mode:vertical-rl;text-orientation:sideways;font-size:27.500px;line-height:30px;font-weight:700;margin:12px 0 0 -4px}`,
`<ui-icon name="dblleft"></ui-icon><ui-icon class="f" name="funnel"></ui-icon><div class="v">筛选器</div>`);
component('data-pane', `:host{width:315px;background:#f0f0f0;display:flex;flex-direction:column;border-right:1px solid #dcdcdc}
.h{display:flex;align-items:center;height:40px;margin-top:13px;padding:0 14px 0 12px;font-size:28px;font-weight:700}.h fit-text{flex:1!important;padding-top:2px}
.h .d{margin-right:15px}.s{margin:26px 8px 0 7px;height:42px;border:1px solid #c8c6c4;border-bottom:2px solid #605e5c;border-radius:7px;background:#fff;display:flex;align-items:center;padding-left:19px;gap:11px;font-size:24.500px;color:#605e5c}.s span{padding-top:3px}
.e{display:flex;flex-direction:column;align-items:center;padding:27px 0 0 0;color:#484644}.e fit-text{margin-right:2px}.e b{color:#0f6a58;font-weight:700;padding-left:4px}.e ui-icon{margin-bottom:14px}`,
`<div class="h"><fit-text>数据</fit-text><ui-icon class="d" name="dots"></ui-icon><ui-icon name="dblright"></ui-icon></div>
<div class="s"><ui-icon name="find"></ui-icon><span>搜索</span></div>
<div class="e"><ui-icon name="tables"></ui-icon><fit-text w="187">尚未加载任何数据。</fit-text><b>获取数据</b></div>`);
component('tool-rail', `:host{width:55px;background:#fafafa;display:flex;flex-direction:column}
div{height:56px;display:flex;align-items:center;justify-content:center;padding-left:1px}.s{background:#e1e1e1;border:1px solid #605e5c;border-right:0;padding:0}.g{margin-top:auto;border-top:1px solid #d8d8d8}`,
`<div class="s"><ui-icon name="cyl"></ui-icon></div><div><ui-icon name="railbuild"></ui-icon></div><div><ui-icon name="railbrush"></ui-icon></div><div><ui-icon name="bookmark"></ui-icon></div><div><ui-icon name="sync"></ui-icon></div><div><ui-icon name="plus"></ui-icon></div><div class="g"><ui-icon name="cog"></ui-icon></div>`);
component('page-tabs', `:host{height:60px;background:#f0f0f0;display:flex;align-items:stretch}
.v{width:42px;margin-left:18px;display:flex;flex-direction:column;align-items:center;justify-content:flex-end;padding-bottom:7px}.v ui-icon{margin-right:2px}.v i{display:block;width:42px;height:5px;border-radius:3px;background:#117865;margin-top:10px}
.p{margin:8px 36px 0 43px}.a{align-self:center}.tab{margin-left:11px;width:133px;background:#fff;border-left:1px solid #8a8886;border-bottom:7px solid #117865;display:flex;align-items:center;justify-content:center;font-size:20px;padding:11px 0 0 0}
.add{margin-left:1px;width:68px;background:#117865;display:flex;align-items:center;justify-content:center;padding-bottom:2px}`,
`<div class="v"><ui-icon name="desktop"></ui-icon><i></i></div><ui-icon class="p" name="phone"></ui-icon><ui-icon class="a" name="tleft"></ui-icon><ui-icon class="a" name="tright" style="margin-left:31px"></ui-icon><div class="tab"><fit-text w="62">第 1 页</fit-text></div><div class="add"><ui-icon name="tabplus"></ui-icon></div>`);
component('status-bar', `:host{height:41px;background:#f0f0f0;border-top:2px solid #dcdcdc;display:flex;align-items:center;padding:4px 31px 0 6px;color:#484644}
.sp{flex:1}.mi{width:7px;height:2.500px;background:#605e5c;margin-right:8px}.tr{width:174px;height:20px;display:flex;align-items:center}.l1{width:76px;height:1.500px;background:#605e5c}.th{width:7px;height:19px;background:#605e5c}.l2{width:4px;height:1.500px;background:#605e5c}.tk{width:2px;height:9px;background:#605e5c}.l3{flex:1;height:1.500px;background:#605e5c}
.pl{margin:0 24px 0 12px}.z{font-size:20px;color:#706e6c;margin-right:34px}`,
`<fit-text w="143">第 1 页(共 1 页)</fit-text><div class="sp"></div><div class="mi"></div><div class="tr"><div class="l1"></div><div class="th"></div><div class="l2"></div><div class="tk"></div><div class="l3"></div></div><svg class="pl" width="12" height="12"><path d="M6 0V12M0 6H12" stroke="#605e5c" stroke-width="2.500"/></svg><fit-text class="z" w="40">91%</fit-text><ui-icon name="fit"></ui-icon>`);

/* ---------- file dialog ---------- */
component('quick-item', `:host{height:56px;display:flex;align-items:center;padding:0 13px 0 61px;color:#fff;flex:none}
.i{width:28px;display:flex;justify-content:center;margin-right:5px}.t{flex:1;padding-top:1px}`,
`<div class="i"><slot name="icon"></slot></div><div class="t"><slot></slot></div><ui-icon name="pin"></ui-icon>`);
component('file-tile', `:host{display:flex;flex-direction:column;align-items:center;color:#fff}.l{display:flex;flex-direction:column;align-items:center;padding-left:1px}`,
`<slot name="icon"></slot><div class="l"><slot></slot></div>`);
const q = (i, t) => `<quick-item><ui-icon slot="icon" name="${i}"></ui-icon>${t}</quick-item>`;
const tile = (i, mt, ls) => `<file-tile><ui-icon slot="icon" name="${i}" style="margin-bottom:${mt}px"></ui-icon>${ls.map(([t, w]) => `<fit-text w="${w}">${t}</fit-text>`).join('')}</file-tile>`;
component('open-dialog', `:host{position:absolute;left:10px;top:0;width:1259px;height:830px;z-index:5;border-radius:14px;background:#383838;box-shadow:0 42px 78px rgba(0,0,0,.5),0 4px 40px rgba(0,0,0,.3);border:1px solid #333;border-top:0;color:#fff;display:flex;flex-direction:column;overflow:hidden}
.t{height:52px;background:#3c3c3c;display:flex;align-items:center;padding:0 21px 0 15px;flex:none}.t .n{flex:1;margin-left:8px;padding-bottom:1px}
.nav{height:82px;background:#1a1a1a;display:flex;padding:2px 13px 1px 25px;flex:none;align-items:flex-start}
.nav .bk{margin-top:31px}.addr{margin:8px 0 0 177px;width:656px;height:63px;border:1px solid #555;display:flex;align-items:center;justify-content:flex-end;padding-right:22px;gap:43px}
.find{margin:8px 0 0 12px;width:356px;height:63px;border:1px solid #5a5a5a;display:flex;align-items:center;justify-content:space-between;padding:0 23px 0 11px;color:#7a7a7a}.find fit-text{padding-bottom:2px}
.bar{height:56px;background:#202020;display:flex;align-items:center;padding:0 28px 0 32px;flex:none}.bar .o{flex:1}
.main{height:493px;background:#191919;display:flex;flex:none;overflow:hidden}
.side{width:252px;flex:none;display:flex;flex-direction:column;overflow:hidden}.cur{height:55px;margin:1px 8px 0 5px;background:#2c2c2c;display:flex;align-items:center;padding-left:22px;flex:none;width:239px}.cur .c{margin:0 5px 0 25px}.cur fit-text{padding-bottom:1px}
.sep{width:213px;height:2px;background:#3a3a3a;margin:27px 0 27px 19px;flex:none}
.sb{width:15px;height:131px;margin-top:68px;background:#8b8b8b;flex:none}
.files{margin-left:16px;width:920px;display:grid;grid-template-columns:repeat(4,230px);grid-template-rows:225px 260px;padding-top:20px;flex:none}
.sb2{width:15px;height:284px;margin:177px 0 0 31px;background:#9b979b;flex:none}
.foot{flex:1;display:flex;padding:32px 33px 0 0;justify-content:flex-end;position:relative}.lab{margin-top:3px}
.in{margin-left:11px;width:521px;height:38px;border:2px solid #fff;display:flex;align-items:center;justify-content:flex-end;padding-right:9px;color:#bbb}
.r{margin-left:21px;display:flex;flex-direction:column;width:329px}.ty{height:37px;border:1px solid #9a9a9a;display:flex;align-items:center;justify-content:space-between;padding:0 9px 1px 3px;color:#ccc}.ty fit-text{color:#fff}
.bt{display:flex;justify-content:space-between;margin:10px 1px 0 1px}.op{width:153px;height:44px;border:2px solid #eee;border-radius:4px;background:#333;display:flex}.op .k{width:124px;display:flex;align-items:center;justify-content:center;padding-right:1px;border-right:2px solid #aaa;margin:2px 0}.op .d{flex:1;display:flex;align-items:center;justify-content:center}
.ca{width:152px;height:44px;border:1px solid #9a9a9a;border-radius:4px;background:#333;display:flex;align-items:center;justify-content:center}.grip{position:absolute;right:4px;bottom:1px}`,
`<div class="t"><ui-icon name="pbi"></ui-icon><div class="n">打开</div><ui-icon name="close" w="16"></ui-icon></div>
<div class="nav"><ui-icon class="bk" name="back"></ui-icon><div class="addr"><ui-icon name="down" w="18" h="11"></ui-icon><ui-icon name="refresh"></ui-icon></div><div class="find"><fit-text w="178">在 powerBI 中搜索</fit-text><ui-icon name="mag" w="19"></ui-icon></div></div>
<div class="bar"><div class="o">组织</div><ui-icon name="view"></ui-icon><ui-icon name="tri" w="9" h="5" style="margin:0 36px 0 14px"></ui-icon><ui-icon name="pane"></ui-icon><ui-icon name="help" style="margin-left:36px"></ui-icon></div>
<div class="main"><div class="side"><div class="cur"><ui-icon name="chev"></ui-icon><ui-icon class="c" name="cloud"></ui-icon><fit-text w="112">baka - 个人</fit-text></div><div class="sep"></div>
${q('dl', '下载')}${q('doc', '文档')}${q('pic', '图片')}${q('desk', '桌面')}${q('music', '音乐')}${q('video', '视频')}${q('game', '游戏')}</div><div class="sb"></div>
<div class="files">${tile('folder1', 29, [['第五六七周-M语', 157], ['言及应用', 84]])}${tile('folder2', 29, [['第五六周-M语言', 157], ['及应用', 63]])}${tile('folder3', 29, [['数据建模与dax语', 164], ['言', 21]])}${tile('folder4', 29, [['数据可视化', 105]])}${tile('xlsx', 10, [['2006-2015年部', 147], ['分省区市生产总', 147], ['值.xlsx', 64]])}</div><div class="sb2"></div></div>
<div class="foot"><fit-text class="lab" w="100">文件名(N):</fit-text><div class="in"><ui-icon name="down" w="12" h="7"></ui-icon></div><div class="r"><div class="ty"><fit-text w="294">Excel 文件 (*.xl;*.xlsx;*.xlsm;*.:</fit-text><ui-icon name="down" w="12" h="7"></ui-icon></div><div class="bt"><div class="op"><div class="k"><fit-text w="73">打开(O)</fit-text></div><div class="d"><ui-icon name="tri" w="17" h="10"></ui-icon></div></div><div class="ca">取消</div></div></div><ui-icon class="grip" name="grip"></ui-icon></div>`);
component('highlight-frame', `:host{position:absolute;left:289px;top:187px;width:980px;height:497px;border:6px solid #04ff22;z-index:6;pointer-events:none}`, ``);
component('steps-recorder', `:host{position:absolute;left:92px;top:82px;width:675px;height:103px;z-index:7;border-radius:12px;overflow:hidden;box-shadow:0 0 0 1.500px #3f3f3f;display:flex;flex-direction:column}
.t{height:50px;background:#f3f3f3;color:#8e8e8e;display:flex;align-items:center;padding:0 32px 2px 12px;flex:none}.t .n{margin:0 auto 0 5px}.t .m{margin-right:65px}
.b{flex:1;display:flex}.k{width:454px;background:#000;display:flex;align-items:center;padding-left:34px;padding-top:1px;color:#fff}.s{flex:1;background:#2f2f2f;border-left:1px solid #444;display:flex;align-items:center;padding-left:49px;padding-top:1px;color:#7e7e7e;gap:17px}`,
`<div class="t"><ui-icon name="recorder"></ui-icon><fit-text class="n" w="252">步骤记录器 - 现在正在录制</fit-text><ui-icon class="m" name="min" w="17"></ui-icon><ui-icon class="m" name="max" w="15" style="color:#dedede"></ui-icon><ui-icon name="close" w="17"></ui-icon></div>
<div class="b"><div class="k"><ui-icon name="pause"></ui-icon><fit-text w="124" style="margin:0 46px 0 23px">Pause Record</fit-text><ui-icon name="stop"></ui-icon><fit-text w="153" style="margin-left:16px">Stop and Review</fit-text></div><div class="s"><ui-icon name="gear2"></ui-icon><fit-text w="75">Settings</fit-text></div></div>`);

component('power-app', `:host{width:2560px;height:1598px;position:relative;display:flex;flex-direction:column;overflow:hidden;background:#f0f0f0}
.main{height:1277px;display:flex;flex:none}.nav{width:71px;background:#f0f0f0;border-right:2px solid #e2e2e2;flex:none}.nav i{display:block;width:5px;height:70px;background:#117865}
.mid{width:2119px;display:flex;flex-direction:column;flex:none}.work{flex:1;display:flex}.cur{position:absolute;left:764px;top:619px;z-index:8}`,
`<title-bar></title-bar><ribbon-bar></ribbon-bar>
<div class="main"><div class="nav"><i></i></div><div class="mid"><div class="work"><report-canvas></report-canvas><filter-pane></filter-pane></div><page-tabs></page-tabs></div><data-pane></data-pane><tool-rail></tool-rail></div>
<status-bar></status-bar>
<open-dialog></open-dialog><highlight-frame></highlight-frame><steps-recorder></steps-recorder><ui-icon class="cur" name="cursor"></ui-icon>`);
</script>
</body>
</html>
